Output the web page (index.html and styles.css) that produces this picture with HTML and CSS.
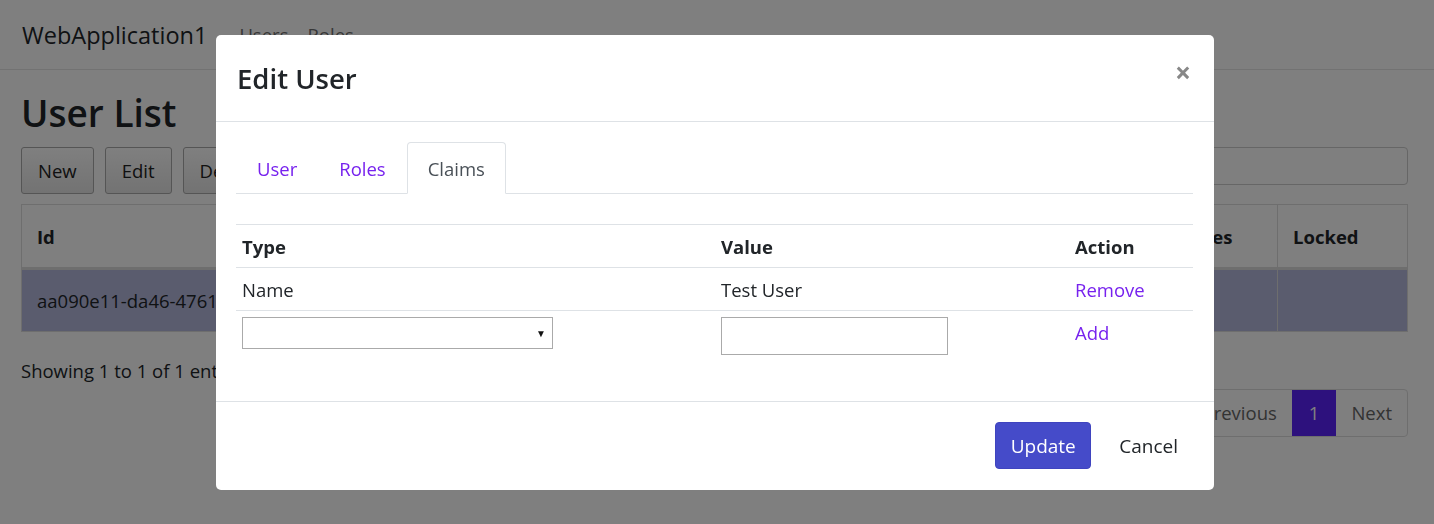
FILE: index.html
```html
<!DOCTYPE html>
<html>
	<head>
		<meta charset="utf-8" />
		<title>User List</title>
		<link rel="stylesheet" href="styles.css">
	</head>
	<body>
		<!--顶部导航-->
		<div class="navbar">
			<span class="brand">WebApplication1</span>
			<a class="nav-link" href="javascript:;">Users</a>
			<a class="nav-link" href="javascript:;">Roles</a>
		</div>
		<div class="container">
			<h1>User List</h1>
			<div class="toolbar">
				<div class="btn-group">
					<button class="btn">New</button>
					<button class="btn">Edit</button>
					<button class="btn">Delete</button>
				</div>
				<input class="search" type="text" />
			</div>
			<table class="grid">
				<thead>
					<tr>
						<th class="col-id">Id</th>
						<th></th>
						<th></th>
						<th class="col-roles">Roles</th>
						<th class="col-locked">Locked</th>
					</tr>
				</thead>
				<tbody>
					<tr class="selected">
						<td><div class="id-cell">aa090e11-da46-4761</div></td>
						<td></td>
						<td></td>
						<td></td>
						<td></td>
					</tr>
				</tbody>
			</table>
			<div class="grid-footer">
				<span class="info">Showing 1 to 1 of 1 entries</span>
				<ul class="pager">
					<li><a href="javascript:;">Previous</a></li>
					<li class="current"><a href="javascript:;">1</a></li>
					<li><a href="javascript:;">Next</a></li>
				</ul>
			</div>
		</div>

		<!--弹出层-->
		<div class="backdrop"></div>
		<div class="modal">
			<div class="modal-header">
				<h5 class="modal-title">Edit User</h5>
				<span class="close">&times;</span>
			</div>
			<div class="modal-body">
				<ul class="tabs">
					<li><a href="javascript:;">User</a></li>
					<li><a href="javascript:;">Roles</a></li>
					<li class="active"><a href="javascript:;">Claims</a></li>
				</ul>
				<table class="claims">
					<thead>
						<tr>
							<th class="c-type">Type</th>
							<th class="c-value">Value</th>
							<th>Action</th>
						</tr>
					</thead>
					<tbody>
						<tr>
							<td>Name</td>
							<td>Test User</td>
							<td><a href="javascript:;">Remove</a></td>
						</tr>
						<tr class="new-row">
							<td><div class="select"><span class="arrow">&#9660;</span></div></td>
							<td><input class="text" type="text" /></td>
							<td><a href="javascript:;">Add</a></td>
						</tr>
					</tbody>
				</table>
			</div>
			<div class="modal-footer">
				<button class="btn-primary">Update</button>
				<button class="btn-link">Cancel</button>
			</div>
		</div>
	</body>
</html>
```

FILE: styles.css
```css
body,div,ul,li,h1,h5,button,input,table{
	margin: 0;
	padding: 0;
}
li{
	list-style: none;
}
a{
	text-decoration: none;
}
body{
	font-family: "Open Sans", "Noto Sans", sans-serif;
	font-size: 18.5px;
	color: #212529;
	background: #fff;
	overflow: hidden;
}
.navbar{
	display: flex;
	align-items: center;
	height: 69px;
	padding: 0 22px;
	border-bottom: 1px solid #e5e5e5;
}
.brand{
	font-size: 23.5px;
	margin-right: 32px;
}
.nav-link{
	color: #6f6f6f;
	margin-right: 19px;
}
.container{
	padding: 0 26px 0 21px;
}
h1{
	font-size: 37px;
	font-weight: 600;
	margin: 21px 0 12px;
	line-height: 1.2;
}
.toolbar{
	display: flex;
	justify-content: space-between;
	align-items: flex-start;
	margin-bottom: 10px;
}
.btn-group{
	display: flex;
	gap: 11px;
}
.btn{
	height: 47px;
	padding: 0 16px;
	font: inherit;
	color: #222;
	background: linear-gradient(#fff, #e6e6e6);
	border: 1px solid #aaa;
	border-radius: 3px;
}
.search{
	width: 360px;
	height: 38px;
	border: 1px solid #ccc;
	border-radius: 4px;
	box-sizing: border-box;
}
.grid{
	width: 100%;
	border-collapse: collapse;
	border: 1px solid #ddd;
}
.grid th{
	height: 62px;
	text-align: left;
	padding: 0 15px;
	border: 1px solid #ddd;
	border-bottom: 3px solid #ddd;
}
.grid td{
	height: 61px;
	padding: 0 15px;
	border: 1px solid #ddd;
	white-space: nowrap;
}
.grid .col-roles{
	width: 79px;
}
.grid .col-locked{
	width: 99px;
}
.grid .selected td{
	background: #b4b8dc;
}
.grid-footer{
	display: flex;
	justify-content: space-between;
	align-items: flex-start;
}
.info{
	margin-top: 26px;
}
.pager{
	display: flex;
	border: 1px solid #ddd;
	border-radius: 4px;
	margin-top: 57px;
}
.pager a{
	display: block;
	height: 46px;
	line-height: 46px;
	padding: 0 15px;
	color: #666;
}
.pager .current a{
	padding: 0 17px;
	color: #fff;
	background: #5a22fa;
}
.backdrop{
	position: fixed;
	left: 0;
	top: 0;
	right: 0;
	bottom: 0;
	background: rgba(0,0,0,.5);
}
.modal{
	position: absolute;
	left: 216px;
	top: 35px;
	width: 998px;
	background: #fff;
	border-radius: 5px;
}
.modal-header{
	display: flex;
	justify-content: space-between;
	align-items: center;
	height: 86px;
	padding: 0 21px;
	border-bottom: 1px solid #dee2e6;
}
.modal-title{
	font-size: 27.5px;
	font-weight: 600;
}
.close{
	font-size: 28px;
	font-weight: 700;
	color: #888;
	margin-top: -12px;
	margin-right: 2px;
}
.modal-body{
	padding: 20px 21px 34px 20px;
}
.tabs{
	display: flex;
	border-bottom: 1px solid #dee2e6;
}
.tabs li{
	margin-bottom: -1px;
}
.tabs a{
	display: block;
	height: 50px;
	line-height: 52px;
	padding: 0 20px;
	color: #7722ee;
	border: 1px solid transparent;
	border-radius: 4px 4px 0 0;
}
.tabs .active a{
	color: #495057;
	border-color: #dee2e6 #dee2e6 #fff;
}
.claims{
	width: 100%;
	margin-top: 30px;
	border-collapse: collapse;
}
.claims th,.claims td{
	text-align: left;
	padding: 0 6px;
	height: 42px;
	border-top: 1px solid #dee2e6;
}
.claims th{
	font-weight: 700;
}
.claims .new-row td{
	vertical-align: top;
	padding-top: 6px;
	height: 50px;
}
.claims .new-row a{
	display: block;
	margin-top: 3px;
}
.claims .c-type{
	width: 467px;
}
.claims .c-value{
	width: 342px;
}
.claims a{
	color: #7722ee;
}
.select{
	display: flex;
	justify-content: flex-end;
	align-items: center;
	width: 311px;
	height: 32px;
	box-sizing: border-box;
	border: 1px solid #aaa;
	padding-right: 6px;
}
.arrow{
	font-size: 10px;
	color: #111;
}
.text{
	display: block;
	width: 227px;
	height: 38px;
	box-sizing: border-box;
	border: 1px solid #aaa;
}
.modal-footer{
	display: flex;
	justify-content: flex-end;
	align-items: center;
	gap: 13px;
	padding: 20px 21px 21px;
	border-top: 1px solid #dee2e6;
}
.btn-primary{
	width: 96px;
	height: 47px;
	padding: 0;
	font: inherit;
	font-size: 19px;
	color: #fff;
	background: #454bc9;
	border: 1px solid #3f44bf;
	border-radius: 4px;
}
.btn-link{
	height: 47px;
	padding: 0 15px;
	font: inherit;
	font-size: 19px;
	color: #212529;
	background: none;
	border: 0;
}
```
